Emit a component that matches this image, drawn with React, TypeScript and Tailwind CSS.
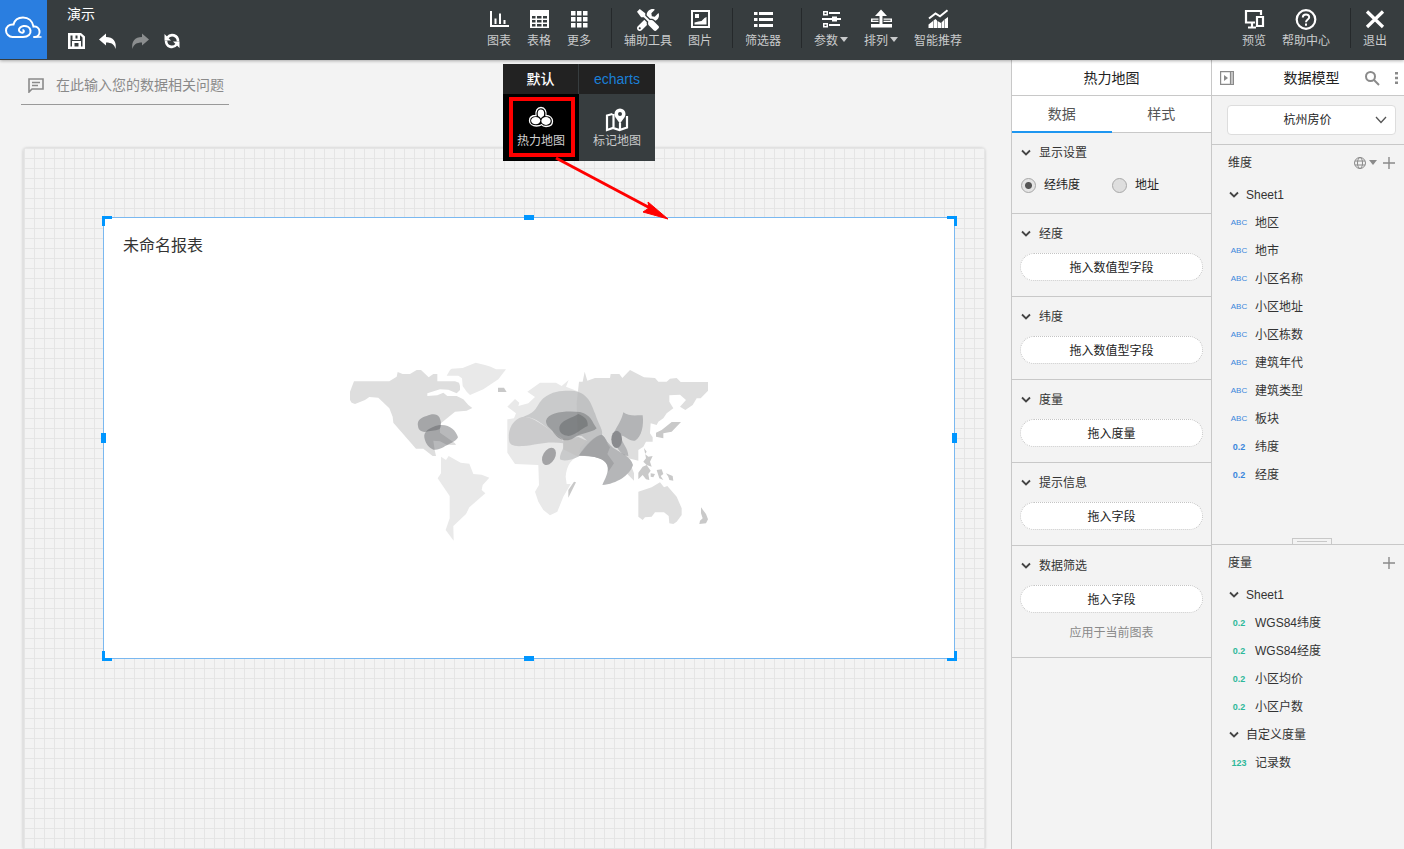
import { useState } from "react";
import type { ReactNode } from "react";
import { FaTools } from "react-icons/fa";

const icons = {
  chart: (
    <path d="M3 3h2v14h17v2H3zM7.500 10.500h2V16h-2zM12 5.500h2V16h-2zM16.500 12h2v4h-2z" />
  ),
  table: (
    <path
      fillRule="evenodd"
      d="M3 2h19v18H3zM5 8v2.500h3.500V8zM10 8v2.500h4.500V8zM16 8v2.500h4V8zM5 12v2.500h3.500V12zM10 12v2.500h4.500V12zM16 12v2.500h4V12zM5 16v2.500h3.500V16zM10 16v2.500h4.500V16zM16 16v2.500h4V16z"
    />
  ),
  more: (
    <path d="M4 3h4.500v4.500H4zM10 3h4.500v4.500H10zM16 3h4.500v4.500H16zM4 9h4.500v4.500H4zM10 9h4.500v4.500H10zM16 9h4.500v4.500H16zM4 15h4.500v4.500H4zM10 15h4.500v4.500H10zM16 15h4.500v4.500H16z" />
  ),
  image: (
    <>
      <path fillRule="evenodd" d="M3 2h19v18H3zM5 4v14h15V4z" />
      <path d="M7 6h4v4H7zM6.500 16.500v-2l4-1 3-.500 3-3 2-1v7.500z" />
    </>
  ),
  list: (
    <path d="M3 4h3.500v3H3zM8 4h14v3H8zM3 10h3.500v3H3zM8 10h14v3H8zM3 16h3.500v3H3zM8 16h14v3H8z" />
  ),
  params: (
    <path
      fillRule="evenodd"
      d="M4 3h5v4.500H4zM5.500 4.500V6h2V4.500zM10 4h11v2H10zM3 10h10V8.500h5V10h4v2h-4v1.500h-5V12H3zM4 15h5v4.500H4zM5.500 16.500V18h2v-1.500zM10 16h11v2H10z"
    />
  ),
  arrange: (
    <path
      fillRule="evenodd"
      d="M12 1.500l6 6.500h-4.500v8H23v3.500H2V16h8.500V8H6zM2 10.500h7.500V14H2zM3.500 11.800v1h6v-1zM14.500 10.500H23V14h-8.500zM14.500 11.800v1h7v-1z"
    />
  ),
  smart: (
    <>
      <path d="M3 10.500l6.500-5 4.500 2.800 7.500-6" fill="none" stroke="currentColor" strokeWidth="2" />
      <path d="M2.500 20v-3.500L7 13v7zM7.500 20v-7.500l2-1.500 1.500 1.500V20zM11.500 20v-7l3.500 2V20zM15.500 20v-5.500l2.500-2.500v8zM18.500 20v-8.500L22 9v11z" />
    </>
  ),
  preview: (
    <path d="M19 7V3H4v11.500h9M10 15v4M6 19.500h8M15 9h6v9h-6z" fill="none" stroke="currentColor" strokeWidth="2.200" />
  ),
  help: (
    <g fill="none" stroke="currentColor" strokeWidth="2.200">
      <circle cx="12" cy="11.500" r="9.300" />
      <path d="M8.800 9.500c0-4 6.400-4 6.400-.3 0 2.300-3.200 2.200-3.200 5M12 15.500v2.200" strokeWidth="2" />
    </g>
  ),
  close: <path d="M4 3.500l16 15.500M20 3.500L4 19" stroke="currentColor" strokeWidth="3.200" />,
  heat: (
    <>
      <path
        d="M12 1.500c4 0 5.500 4 5 8 4 0 6.500 2.500 6.500 5.800 0 3.200-2.700 5.200-6.500 5.200-2 0-3.500-.5-4.500-1.800-1.200 1-3 1.300-5 1.300-4 0-7-2-7-5.300S3 9.500 7 9.500C6.500 5 8 1.500 12 1.500z"
        fill="none"
        stroke="currentColor"
        strokeWidth="1.300"
      />
      <path d="M12 3.500c3 0 3.700 3 2.800 6.500-1.500.8-2.300 1.500-3 2.600-.6-1.200-1.500-2-2.800-2.600C8.300 6 9 3.500 12 3.500z" />
      <ellipse cx="6.700" cy="14.600" rx="4.600" ry="3.700" />
      <ellipse cx="17" cy="15" rx="4.700" ry="3.900" />
    </>
  ),
  marker: (
    <>
      <path d="M7.500 8L2 9.500V24l6-2 6.500 2 7.500-2.500V10M8.500 8v13.500M15 17v6" fill="none" stroke="currentColor" strokeWidth="2.200" />
      <path fillRule="evenodd" d="M15 2.500a5.500 5.500 0 0 1 5.500 5.500c0 3.500-3.500 6-5.500 10-2-4-5.500-6.500-5.500-10A5.500 5.500 0 0 1 15 2.500zM15 6a2 2 0 1 0 0 4 2 2 0 0 0 0-4z" />
    </>
  ),
};

type IconName = keyof typeof icons;

const Icon = ({ name }: { name: IconName }) => (
  <svg viewBox="0 0 24 24" className="size-6 overflow-visible" fill="currentColor" aria-hidden="true">
    {icons[name]}
  </svg>
);

const Caret = () => (
  <span className="block h-0 w-0 border-x-4 border-t-[5px] border-x-transparent border-t-current" />
);

const ToolButton = ({
  label,
  icon,
  caret,
}: {
  label: string;
  icon: ReactNode;
  caret?: boolean;
}) => (
  <button type="button" className="flex h-[60px] flex-col items-center px-2 pt-2 text-white">
    <span className="flex h-6 items-center">{icon}</span>
    <span className="flex items-center gap-0.5 text-xs leading-[18px] whitespace-nowrap text-[#c9cbcc]">
      {label}
      {caret && (
        <span className="pb-1">
          <Caret />
        </span>
      )}
    </span>
  </button>
);

const Divider = () => <span className="mt-2 mr-1 ml-3 h-10 w-px bg-[#25292b]" />;

const Chevron = () => (
  <svg viewBox="0 0 10 10" className="size-2.5 text-[#444]" fill="none" stroke="currentColor" strokeWidth="1.800" aria-hidden="true">
    <path d="M1 2.500l4 4 4-4" />
  </svg>
);

const ChartMenu = () => (
  <div className="absolute top-16 left-1/2 z-20 w-[152px] -translate-x-1/2">
    <div className="flex h-[30px] bg-[#222]">
      <button type="button" className="w-1/2 border-r border-[#373d3f] text-sm font-medium text-white">
        默认
      </button>
      <button type="button" className="w-1/2 text-sm text-[#1b7fd6]">
        echarts
      </button>
    </div>
    <div className="flex h-[67px] bg-[#373d3f]">
      <button type="button" className="relative flex w-1/2 flex-col items-center bg-black pt-3 text-white">
        <span className="absolute top-[3px] right-1 bottom-1 left-1.5 border-4 border-[#f00]" />
        <Icon name="heat" />
        <span className="text-xs leading-[22px] text-[#d0d0d0]">热力地图</span>
      </button>
      <button type="button" className="flex w-1/2 flex-col items-center pt-3 text-white">
        <Icon name="marker" />
        <span className="text-xs leading-[22px] text-[#c9cbcc]">标记地图</span>
      </button>
    </div>
    <svg viewBox="0 0 120 70" className="pointer-events-none absolute top-[92px] left-[51px] h-[70px] w-[120px]" aria-hidden="true">
      <path d="M2 2l94 50" stroke="#f00" strokeWidth="3" />
      <path d="M114 63L94 46l1 6-6 4z" fill="#f00" stroke="#f00" />
    </svg>
  </div>
);

const Header = () => (
  <header className="relative z-10 flex h-[60px] justify-between bg-[#373d3f] shadow-[0_1px_3px_rgba(0,0,0,0.3)]">
    <div className="flex w-[215px]">
      <a href="#" aria-label="首页" className="flex h-[59px] w-[47px] items-center justify-center bg-[#2a7ee0] pb-1 text-white">
        <svg viewBox="0 0 40 26" className="h-[26px] w-10" fill="none" stroke="currentColor" strokeWidth="2" aria-hidden="true">
          <path d="M30 22c4 .5 6-3 5.500-6-.5-3-3-5-6-4.500C28.500 6 24.500 2.500 19 2.500c-5.500 0-8.500 3-9.500 7C5 9 2 12 2 15.500S5 22 8.500 22H19c5.500 0 8-3 7.500-6.500-.5-3.500-4-5-7-4.500s-5 2.500-4.500 4.500 3 2.500 4 2c1.500-.7 1-2.500-.5-2.500" />
          <path d="M29 22h8.500" strokeWidth="1.500" />
        </svg>
      </a>
      <div className="flex flex-col pt-1 pl-5">
        <h1 className="text-sm leading-5 text-white">演示</h1>
        <div className="mt-2 flex gap-3.5 text-white">
          <button type="button" aria-label="保存">
            <svg viewBox="0 0 18 18" className="size-[18px]" fill="currentColor">
              <path fillRule="evenodd" d="M1 1h13l4 3.500V17H1zM3.500 3.500v11H5V9h9v5.500h1.500v-9L13.500 3.500H13V8H5.500V3.500zM8.500 3.500v3h2v-3zM7.500 11v3.500h4V11z" />
            </svg>
          </button>
          <button type="button" aria-label="撤销">
            <svg viewBox="0 0 18 18" className="size-[18px]" fill="currentColor">
              <path d="M0 7.500L7 1.500v3.500c7 0 11 4.500 9.500 12-1-4.500-4-6.500-9.500-6.500v3z" />
            </svg>
          </button>
          <button type="button" aria-label="重做" className="text-[#8b8e8f]">
            <svg viewBox="0 0 18 18" className="size-[18px]" fill="currentColor">
              <path d="M18 7.500l-7-6v3.500C4 5 0 9.500 1.500 17c1-4.500 4-6.500 9.500-6.500v3z" />
            </svg>
          </button>
          <button type="button" aria-label="刷新">
            <svg viewBox="0 0 18 18" className="size-[18px]" fill="none" stroke="currentColor" strokeWidth="2.600">
              <path d="M4.500 5.500c3-4 10.500-3 10.500 4M13.500 12.500C10.500 16.500 3 15.500 3 8.500" />
              <path d="M1.500 2v6.500H8zM16.500 16V9.500H10z" fill="currentColor" stroke="none" />
            </svg>
          </button>
        </div>
      </div>
    </div>

    <nav className="flex">
      <ToolButton label="图表" icon={<Icon name="chart" />} />
      <ToolButton label="表格" icon={<Icon name="table" />} />
      <div className="relative">
        <ToolButton label="更多" icon={<Icon name="more" />} />
        <ChartMenu />
      </div>
      <Divider />
      <ToolButton label="辅助工具" icon={<FaTools className="size-[22px]" />} />
      <ToolButton label="图片" icon={<Icon name="image" />} />
      <Divider />
      <ToolButton label="筛选器" icon={<Icon name="list" />} />
      <Divider />
      <ToolButton label="参数" icon={<Icon name="params" />} caret />
      <ToolButton label="排列" icon={<Icon name="arrange" />} caret />
      <ToolButton label="智能推荐" icon={<Icon name="smart" />} />
    </nav>

    <div className="flex pr-[9px]">
      <ToolButton label="预览" icon={<Icon name="preview" />} />
      <ToolButton label="帮助中心" icon={<Icon name="help" />} />
      <Divider />
      <ToolButton label="退出" icon={<Icon name="close" />} />
    </div>
  </header>
);

const WorldMap = () => (
  <svg viewBox="0 0 1140 600" className="h-[200px] w-[380px]" role="img" aria-label="热力地图">
    {/* Americas */}
    <path
      fill="#dedede"
      d="M42 94H148L170 80 173 66 188 72H210L230 60H243L266 82 280 72H292V94H345L357 98 360 108V120L350 130 325 119 300 118 262 130V138L292 136 310 128 322 138H350L370 148 385 165 397 174 380 182 345 185 300 222V248L345 280 348 285 320 284 300 274 280 272 284 300 288 318H278L250 296H228L160 218 158 200 148 175 115 143 88 141 75 150 45 162 35 158 30 150V125z"
    />
    <path fill="#e9e9e9" d="M330 60L335 56 368 54 407 38 435 45 452 50 468 58H498L475 88 430 118 390 135 380 125 368 108 366 85 355 77H320z" />
    <path fill="#c9c9c9" d="M474 113H492L500 126H474z" />
    <path
      fill="#e9e9e9"
      d="M303 320L318 330 326 318 362 338 388 341 400 372 425 374 448 383 428 405 425 420 436 430 388 472 378 492 340 528 341 572 317 540 329 505V438L293 385 303 370z"
    />
    <g fill="#55575c">
      <path opacity=".42" d="M234 228C230 210 245 202 260 198C275 190 292 190 298 202C305 215 305 232 298 238C285 243 268 243 255 246C240 244 235 238 234 228z" />
      <path opacity=".42" d="M253 262C250 245 270 232 295 226C325 220 348 240 354 262C348 275 325 282 310 292C295 300 283 302 275 296C262 290 255 275 253 262z" />
    </g>

    <g transform="translate(480 0)">
      {/* Europe and Africa */}
      <path
        fill="#e9e9e9"
        d="M22 208L42 205 48 190 22 170 45 147 58 158 55 168 85 160 105 141 82 125 120 98H168L185 108 206 90 198 110 237 125 245 200 240 318C215 325 200 345 197 380L200 402H212L190 440 172 485 150 496 130 480 115 455 105 425 117 405 115 345 45 342 22 308z"
      />
      {/* Asia */}
      <path
        fill="#dedede"
        d="M237 95H248L254 65 262 92 285 84H330L332 72H358L367 84 390 60 432 82 465 84 475 95H500L510 86 530 84 542 96H624V122L602 145H590L578 165 556 180 540 170 558 150 540 134 508 136V155L520 175 500 190 490 205 475 215 470 225 452 220 450 250 458 262V275H438L430 290 415 300V332L385 325 402 370V392L380 370 340 300 320 270 235 312 230 160z"
      />
      <g fill="#c9c9c9">
        <path d="M515 216H543L515 245 490 250V265L468 260V248L485 240z" />
        <path d="M228 397L205 443V420L222 395zM603 472L618 492 624 508 618 520 598 522 600 512 608 505 603 490z" />
        <path d="M432 294L440 305 435 312 445 320 458 318 450 335 455 350 440 345 430 335 438 325zM415 368L428 350 440 345 452 362 445 372 448 390 438 388 428 375 415 388zM452 370L465 372 460 382 452 380zM470 360L485 358 490 372 482 378 490 390 478 385zM498 370L518 378 520 392 508 390 505 380z" />
      </g>
      <path
        fill="#dedede"
        d="M415 425L455 412 480 397 492 412 502 408 530 440 545 475V495L530 515 520 522 508 520 506 498 492 487H465L455 500 435 502 428 510 415 500z"
      />
      {/* heat areas */}
      <path
        fill="#77797d"
        opacity=".28"
        d="M70 200C115 185 105 170 130 145C160 120 190 122 215 122C265 125 275 165 285 190C295 225 312 240 305 258C285 270 245 300 235 320C215 330 190 335 180 328C178 310 190 300 190 290V268L150 240C120 215 100 200 70 200z"
      />
      <path
        fill="#77797d"
        opacity=".26"
        d="M27 270C22 225 50 200 75 200C100 203 130 225 150 240C170 258 190 262 190 280C140 272 110 285 70 288C40 290 28 285 27 270z"
      />
      <path fill="#c4c4c4" d="M190 265C215 270 240 258 260 272L240 295 235 320 190 298z" />
      <path
        fill="#4d4f54"
        opacity=".36"
        d="M138 212C145 185 200 182 240 186C275 195 275 215 290 235C275 250 240 248 220 265C195 280 170 265 157 242C145 230 138 225 138 212z"
      />
      <path
        fill="#4d4f54"
        opacity=".36"
        d="M178 235C180 210 215 205 235 192C255 200 265 210 263 228C245 235 225 257 205 258C190 256 178 250 178 235z"
      />
      <path fill="#e0e0e0" d="M228 258L245 258 262 272 250 268z" />
      <ellipse cx="147" cy="319" rx="18" ry="28" transform="rotate(30 147 319)" fill="#a3a3a5" />
      <path
        fill="#b5b6b8"
        d="M235 318C255 285 285 255 305 254C318 262 325 285 345 297C365 310 392 320 399 345C390 375 350 402 307 405C315 385 327 370 322 345C315 325 290 318 235 318z"
      />
      <path fill="#a2a3a5" d="M237 316C260 283 287 256 305 254C318 262 320 280 330 292L322 312 342 340 325 365C327 330 295 318 237 316z" />
      <path
        fill="#5c5e63"
        opacity=".33"
        d="M370 187C385 200 410 195 428 196C432 225 425 262 405 272C390 275 375 258 362 256C365 280 385 295 385 318C370 318 350 300 342 270C335 240 360 230 370 187z"
      />
      <ellipse cx="350" cy="268" rx="16" ry="26" fill="#8a8b8e" />
    </g>
  </svg>
);

const handles = [
  "-top-0.5 -left-0.5 size-2.5 border-t-[3px] border-l-[3px]",
  "-top-0.5 -right-[3px] size-2.5 border-t-[3px] border-r-[3px]",
  "-bottom-[3px] -left-0.5 size-2.5 border-b-[3px] border-l-[3px]",
  "-right-[3px] -bottom-[3px] size-2.5 border-r-[3px] border-b-[3px]",
  "-top-[3px] left-1/2 h-[5px] w-2.5 -translate-x-1/2 bg-[#0096ff]",
  "-bottom-[3px] left-1/2 h-[5px] w-2.5 -translate-x-1/2 bg-[#0096ff]",
  "top-1/2 -left-[3px] h-2.5 w-[5px] -translate-y-1/2 bg-[#0096ff]",
  "top-1/2 -right-[3px] h-2.5 w-[5px] -translate-y-1/2 bg-[#0096ff]",
];

const Workspace = () => (
  <main className="flex min-w-0 flex-1 flex-col pr-[26px] pl-[23px]">
    <label className="-ml-0.5 flex h-[45px] w-52 items-center gap-3 border-b border-[#999] pt-1.5 pl-[7px] text-[#8a8a8a]">
      <svg viewBox="0 0 16 16" className="size-4 shrink-0" fill="none" stroke="currentColor" strokeWidth="1.600" aria-hidden="true">
        <path d="M1 15V2h14v10H4zM4 5.500h8M4 8.500h6" />
      </svg>
      <input
        aria-label="数据相关问题"
        placeholder="在此输入您的数据相关问题"
        className="min-w-0 flex-1 bg-transparent text-sm outline-none placeholder:text-[#8a8a8a]"
      />
    </label>
    <div className="mt-[43px] flex-1 rounded-t border-l border-[#e0e0e0] bg-[linear-gradient(to_right,#e5e5e5_1px,transparent_1px),linear-gradient(to_bottom,#e5e5e5_1px,transparent_1px)] bg-[size:10px_10px] pt-[69px] pr-[30px] pl-[79px] shadow-[0_0_3px_rgba(0,0,0,0.2)]">
      <section className="relative flex h-[442px] flex-col border border-[#7ab8f0] bg-white">
        <h2 className="px-[19px] pt-4 text-base leading-6 text-[#333]">未命名报表</h2>
        <div className="flex flex-1 items-center justify-center pb-4 pl-0.5">
          <WorldMap />
        </div>
        {handles.map((cls) => (
          <span key={cls} className={`absolute border-[#0096ff] ${cls}`} />
        ))}
      </section>
    </div>
  </main>
);

const Section = ({ title, children }: { title: string; children: ReactNode }) => (
  <section className="border-b border-[#c8c8c8] px-2 pb-[15px]">
    <h3 className="flex h-[39px] items-center gap-2 pl-px text-xs text-[#333]">
      <Chevron />
      {title}
    </h3>
    {children}
  </section>
);

const DropZone = ({ text }: { text: string }) => (
  <button type="button" className="block h-7 w-full rounded-full border border-dotted border-[#c4c4c4] bg-white pt-0.5 text-xs text-[#222]">
    {text}
  </button>
);

const zones = [
  { title: "经度", text: "拖入数值型字段" },
  { title: "纬度", text: "拖入数值型字段" },
  { title: "度量", text: "拖入度量" },
  { title: "提示信息", text: "拖入字段" },
];

const SettingsPanel = () => {
  const [mode, setMode] = useState("经纬度");
  return (
    <aside className="w-[201px] shrink-0 border-x border-[#c8c8c8]">
      <h2 className="flex h-9 items-center justify-center border-b border-[#c8c8c8] bg-white text-sm text-[#222]">
        热力地图
      </h2>
      <div className="flex h-[37px] border-b border-[#c8c8c8] bg-white text-sm text-[#555]">
        <button type="button" className="-mb-px flex-1 border-b-2 border-[#1e96f0]">
          数据
        </button>
        <button type="button" className="flex-1">
          样式
        </button>
      </div>
      <Section title="显示设置">
        <div className="flex h-[26px] items-center text-xs text-[#222]">
          {["经纬度", "地址"].map((item) => (
            <label key={item} className="flex w-[91px] items-center gap-2 pl-px">
              <input
                type="radio"
                name="mode"
                checked={mode === item}
                onChange={() => setMode(item)}
                className="size-[15px] appearance-none rounded-full border border-[#a8a8a8] bg-[#dedede] checked:bg-[radial-gradient(circle,#555_3px,#e4e4e4_4px)]"
              />
              {item}
            </label>
          ))}
        </div>
      </Section>
      {zones.map((zone) => (
        <Section key={zone.title} title={zone.title}>
          <DropZone text={zone.text} />
        </Section>
      ))}
      <Section title="数据筛选">
        <DropZone text="拖入字段" />
        <p className="pt-3 text-center text-xs leading-[17px] text-[#8a8a8a]">应用于当前图表</p>
      </Section>
    </aside>
  );
};

const dimensions = [
  { type: "ABC", name: "地区" },
  { type: "ABC", name: "地市" },
  { type: "ABC", name: "小区名称" },
  { type: "ABC", name: "小区地址" },
  { type: "ABC", name: "小区栋数" },
  { type: "ABC", name: "建筑年代" },
  { type: "ABC", name: "建筑类型" },
  { type: "ABC", name: "板块" },
  { type: "0.2", name: "纬度" },
  { type: "0.2", name: "经度" },
];

const measures = [
  { type: "0.2", name: "WGS84纬度" },
  { type: "0.2", name: "WGS84经度" },
  { type: "0.2", name: "小区均价" },
  { type: "0.2", name: "小区户数" },
];

const FieldGroup = ({
  title,
  fields,
  color,
}: {
  title: string;
  fields: { type: string; name: string }[];
  color: string;
}) => (
  <div className="pl-[17px] text-xs text-[#333]">
    <h4 className="flex h-7 items-center gap-[7px] pt-0.5">
      <Chevron />
      {title}
    </h4>
    <ul>
      {fields.map((field) => (
        <li key={field.name} className="flex h-7 items-center gap-1.5 pt-0.5">
          <span className={`w-5 text-center ${color} ${field.type === "ABC" ? "text-[8px]" : "text-[9px] font-bold"}`}>
            {field.type}
          </span>
          {field.name}
        </li>
      ))}
    </ul>
  </div>
);

const AddButton = () => (
  <button type="button" aria-label="添加" className="text-[#8a8a8a]">
    <svg viewBox="0 0 14 14" className="size-3.5" stroke="currentColor" strokeWidth="1.400">
      <path d="M7 1v12M1 7h12" />
    </svg>
  </button>
);

const DataPanel = () => (
  <aside className="w-48 shrink-0">
    <div className="flex h-9 items-center border-b border-[#c8c8c8] bg-white pl-2 text-[#8a8a8a]">
      <button type="button" aria-label="收起">
        <svg viewBox="0 0 14 14" className="size-3.5" fill="none" stroke="currentColor" strokeWidth="1.200">
          <path d="M.6.600h12.800v12.800H.6zM10.500 1v12" />
          <path d="M11 1h2v12h-2z" fill="#c4c4c4" stroke="none" />
          <path d="M4 4v6l4-3z" fill="currentColor" stroke="none" />
        </svg>
      </button>
      <h2 className="flex-1 pl-[25px] text-center text-sm text-[#222]">数据模型</h2>
      <button type="button" aria-label="搜索">
        <svg viewBox="0 0 16 16" className="size-4" fill="none" stroke="currentColor" strokeWidth="2">
          <circle cx="6.500" cy="6.500" r="4.500" />
          <path d="M10 10l5 5" />
        </svg>
      </button>
      <button type="button" aria-label="更多操作" className="pr-1.5 pl-[15px]">
        <svg viewBox="0 0 3 12" className="h-3 w-[3px]" fill="currentColor">
          <path d="M0 0h3v2.500H0zM0 4.700h3v2.500H0zM0 9.400h3v2.500H0z" />
        </svg>
      </button>
    </div>
    <div className="relative h-[49px] border-b border-[#c8c8c8] pt-[9px] pr-2 pl-[15px]">
      <select
        aria-label="数据模型"
        className="h-[30px] w-full appearance-none rounded-sm border border-[#ddd] bg-white pr-4 pl-2 text-xs text-[#222] [text-align-last:center]"
      >
        <option>杭州房价</option>
      </select>
      <svg viewBox="0 0 12 8" className="pointer-events-none absolute top-5 right-[17px] h-2 w-3" fill="none" stroke="#555" strokeWidth="1.300" aria-hidden="true">
        <path d="M1 1l5 5.500L11 1" />
      </svg>
    </div>

    <div className="relative h-[400px] border-b border-[#c8c8c8]">
      <div className="flex h-[35px] items-center pr-2 pl-4 text-xs text-[#333]">
        <h3 className="flex-1">维度</h3>
        <button type="button" aria-label="地理" className="mr-[5px] flex items-center gap-[3px] text-[#8a8a8a]">
          <svg viewBox="0 0 12 12" className="size-3" fill="none" stroke="currentColor">
            <circle cx="6" cy="6" r="5.500" />
            <ellipse cx="6" cy="6" rx="2.500" ry="5.500" />
            <path d="M1 4h10M1 8h10" />
          </svg>
          <Caret />
        </button>
        <AddButton />
      </div>
      <FieldGroup title="Sheet1" fields={dimensions} color="text-[#3c86dc]" />
      <span className="absolute bottom-0 left-20 flex h-1.5 w-10 items-center border border-b-0 border-[#c8c8c8] px-1">
        <span className="h-px w-full bg-[#c8c8c8]" />
      </span>
    </div>

    <div className="flex h-[35px] items-center pr-2 pl-4 text-xs text-[#333]">
      <h3 className="flex-1">度量</h3>
      <AddButton />
    </div>
    <FieldGroup title="Sheet1" fields={measures} color="text-[#2fb89a]" />
    <FieldGroup title="自定义度量" fields={[{ type: "123", name: "记录数" }]} color="text-[#2fb89a]" />
  </aside>
);

export default function App() {
  return (
    <div className="flex min-h-screen flex-col bg-[#f3f3f3] font-['Liberation_Sans','Noto_Sans_CJK_SC',sans-serif]">
      <Header />
      <div className="flex flex-1">
        <Workspace />
        <SettingsPanel />
        <DataPanel />
      </div>
    </div>
  );
}
